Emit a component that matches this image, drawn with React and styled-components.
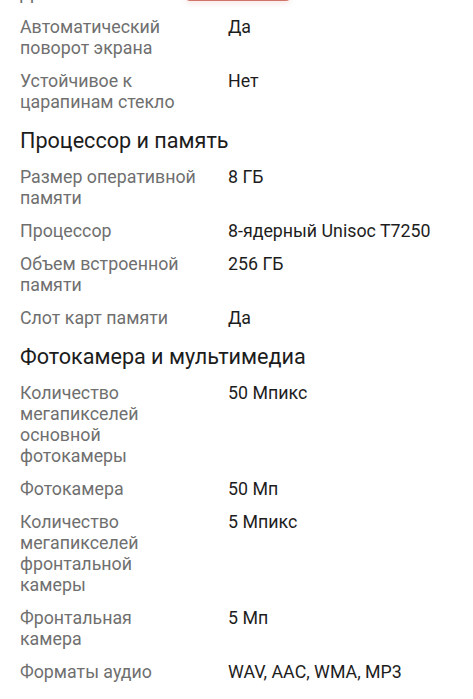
import React from "react";
import styled, { createGlobalStyle } from "styled-components";

const GlobalStyle = createGlobalStyle`
  html, body {
    margin: 0;
    padding: 0;
    background: #ffffff;
  }
  body {
    font-family: Roboto, "Noto Sans", Arial, sans-serif;
    -webkit-font-smoothing: antialiased;
  }
`;

const Page = styled.div`
  position: relative;
  width: 473px;
  height: 699px;
  overflow: hidden;
  background: #fff;
`;

const Content = styled.div`
  margin-top: -23px;
  padding: 0 20px;
`;

// bottom edge of the floating red tab that is scrolled above the view
const FloatingTab = styled.div`
  position: absolute;
  top: -30px;
  left: 186px;
  width: 104px;
  height: 31px;
  border-radius: 4px;
  background: #d0776a;
  box-shadow: 0 2px 6px rgba(208, 119, 106, 0.18);
`;

const Section = styled.section`
  display: flex;
  flex-direction: column;
`;

const SectionTitle = styled.h2`
  margin: 0;
  padding: 9px 0 5px;
  font-size: 21.6px;
  line-height: 28px;
  font-weight: 400;
  color: #1c1c1c;
`;

const Row = styled.div`
  display: grid;
  grid-template-columns: 176px 1fr;
  column-gap: 32px;
  padding: 6px 0;
  font-size: 17.8px;
  line-height: 21px;
`;

const Label = styled.div`
  color: #6f6f6f;
`;

const Value = styled.div`
  color: #1d1d1d;
`;

const sections = [
  {
    title: null,
    rows: [
      ["Диагональ", ""],
      ["Автоматический поворот экрана", "Да"],
      ["Устойчивое к царапинам стекло", "Нет"],
    ],
  },
  {
    title: "Процессор и память",
    rows: [
      ["Размер оперативной памяти", "8 ГБ"],
      ["Процессор", "8-ядерный Unisoc T7250"],
      ["Объем встроенной памяти", "256 ГБ"],
      ["Слот карт памяти", "Да"],
    ],
  },
  {
    title: "Фотокамера и мультимедиа",
    rows: [
      ["Количество мегапикселей основной фотокамеры", "50 Мпикс"],
      ["Фотокамера", "50 Мп"],
      ["Количество мегапикселей фронтальной камеры", "5 Мпикс"],
      ["Фронтальная камера", "5 Мп"],
      ["Форматы аудио", "WAV, AAC, WMA, MP3"],
    ],
  },
];

export default function App() {
  return (
    <Page>
      <GlobalStyle />
      <FloatingTab />
      <Content>
        {sections.map((section, i) => (
          <Section key={i}>
            {section.title && <SectionTitle>{section.title}</SectionTitle>}
            {section.rows.map(([label, value]) => (
              <Row key={label}>
                <Label>{label}</Label>
                <Value>{value}</Value>
              </Row>
            ))}
          </Section>
        ))}
      </Content>
    </Page>
  );
}
